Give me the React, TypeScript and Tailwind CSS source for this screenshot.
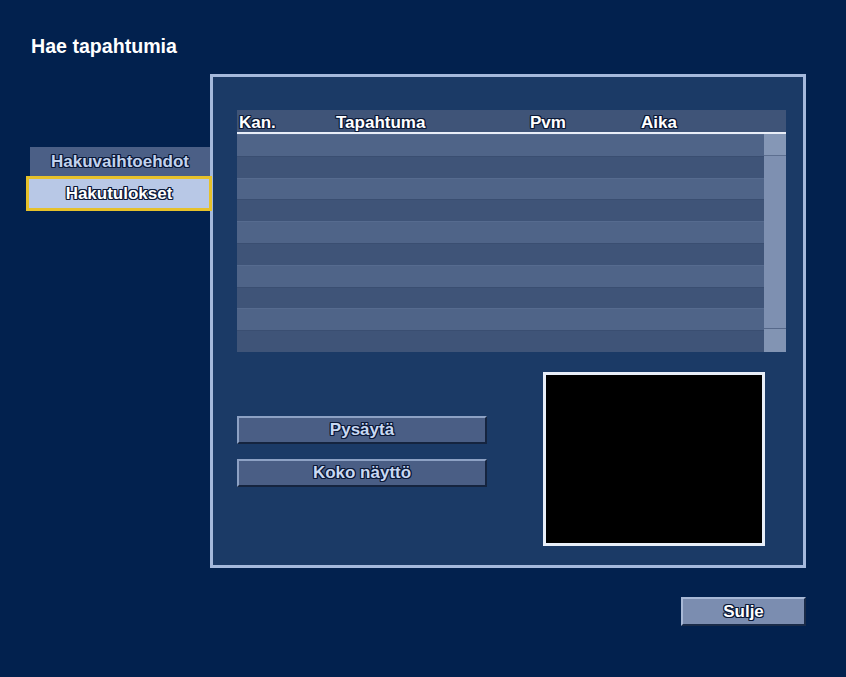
import React from "react";

const outline =
  "[text-shadow:-1px_0_#0a1836,1px_0_#0a1836,0_-1px_#0a1836,0_1px_#0a1836,-1px_-1px_#0a1836,1px_1px_#0a1836,-1px_1px_#0a1836,1px_-1px_#0a1836]";

const rows = Array.from({ length: 10 }, (_, i) => i);

function BevelButton({ label }: { label: string }) {
  return (
    <button
      className={`flex h-[28px] w-[250px] items-center justify-center border-t-2 border-l-2 border-r-2 border-b-2 border-t-[#8da1c4] border-l-[#8da1c4] border-r-[#15243f] border-b-[#15243f] bg-[#4a5e85] text-[17px] font-bold text-[#c9d8f2] ${outline}`}
    >
      {label}
    </button>
  );
}

export default function App() {
  return (
    <div className="relative h-[677px] w-[846px] overflow-hidden bg-[#02214e] font-['Liberation_Sans',Arial,sans-serif]">
      <h1 className="pl-[31px] pt-[34px] text-[19.6px] font-bold leading-[24px] text-white">
        Hae tapahtumia
      </h1>

      <div className="mt-[16px] flex">
        {/* side tabs */}
        <div className="relative z-10 w-[210px] pt-[73px]">
          <div
            className={`ml-[30px] flex h-[29px] w-[180px] items-center justify-center bg-[#4b5f86] text-[17px] font-bold text-[#c3d3ef] ${outline}`}
          >
            Hakuvaihtoehdot
          </div>
          <div
            className={`ml-[26px] flex h-[35px] w-[186px] items-center justify-center border-[3px] border-[#e6c12a] bg-[#b8c8e6] text-[17px] font-bold text-white ${outline}`}
          >
            Hakutulokset
          </div>
        </div>

        {/* main panel */}
        <div className="h-[494px] w-[596px] border-[3px] border-[#a5b9dc] bg-[#1b3a66] pl-[24px] pt-[33px]">
          <div className="w-[549px]">
            <div
              className={`grid h-[22px] grid-cols-[97px_194px_111px_1fr] items-center bg-[#3f5478] pl-[2px] text-[17px] font-bold text-white ${outline}`}
            >
              <span>Kan.</span>
              <span>Tapahtuma</span>
              <span>Pvm</span>
              <span>Aika</span>
            </div>
            <div className="h-[2px] bg-[#e9eef8]" />
            <div className="flex">
              <div className="flex-1">
                {rows.map((i) => (
                  <div
                    key={i}
                    className={
                      i % 2 === 0
                        ? "h-[21.8px] border-t border-[#566b8f] bg-[#4f6488]"
                        : "h-[21.8px] border-t border-[#3a4e71] bg-[#3f5478]"
                    }
                  />
                ))}
              </div>
              <div className="flex w-[22px] flex-col bg-[#7e90b1]">
                <div className="h-[22px] border-b border-[#5d6f90] bg-[#8597b6]" />
                <div className="flex-1 border-b border-[#56688a]" />
                <div className="h-[23px] bg-[#8294b3]" />
              </div>
            </div>
          </div>

          <div className="mt-[20px] flex">
            <div className="flex w-[250px] flex-col gap-[15px] pt-[44px]">
              <BevelButton label="Pysäytä" />
              <BevelButton label="Koko näyttö" />
            </div>
            <div className="ml-[56px] h-[174px] w-[222px] border-[3px] border-[#e8eef8] bg-black" />
          </div>
        </div>
      </div>

      <div className="mt-[29px] flex w-[806px] justify-end">
        <button
          className={`flex h-[29px] w-[125px] items-center justify-center border-2 border-t-[#a7b8d6] border-l-[#a7b8d6] border-r-[#1a2b48] border-b-[#1a2b48] bg-[#7b8db0] text-[17px] font-bold text-white ${outline}`}
        >
          Sulje
        </button>
      </div>
    </div>
  );
}
